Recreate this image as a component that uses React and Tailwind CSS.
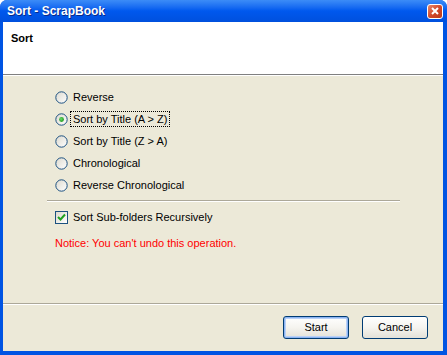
import { useState } from "react";

const options = [
  "Reverse",
  "Sort by Title (A > Z)",
  "Sort by Title (Z > A)",
  "Chronological",
  "Reverse Chronological",
];

const Radio = ({ checked }) => (
  <svg width="13" height="13" viewBox="0 0 13 13" className="shrink-0">
    <defs>
      <linearGradient id="rg" x1="0" y1="0" x2="1" y2="1">
        <stop offset="0" stopColor="#DCD9CE" />
        <stop offset="1" stopColor="#FFFFFF" />
      </linearGradient>
      <radialGradient id="dot" cx="0.4" cy="0.4" r="0.6">
        <stop offset="0" stopColor="#6BDC6B" />
        <stop offset="1" stopColor="#1E9A1E" />
      </radialGradient>
    </defs>
    <circle cx="6.5" cy="6.5" r="5.7" fill="url(#rg)" stroke="#1C5180" strokeWidth="1" />
    {checked && <circle cx="6.5" cy="6.5" r="2.4" fill="url(#dot)" />}
  </svg>
);

const Checkbox = () => (
  <div className="w-[13px] h-[13px] border border-[#1C5180] bg-gradient-to-br from-[#DCD9CE] to-white flex items-center justify-center shrink-0">
    <svg width="9" height="9" viewBox="0 0 9 9">
      <path d="M1 4 L3.5 6.5 L8 1.5" fill="none" stroke="#21A121" strokeWidth="2" />
    </svg>
  </div>
);

const Button = ({ children, active }) => (
  <button
    className={`w-[66px] h-[23px] rounded-[3px] border border-[#003C74] bg-gradient-to-b from-white via-[#F5F4EF] to-[#E3E1D8] text-[11px] text-black ${
      active ? "shadow-[inset_0_0_0_1px_#8CB4F2,inset_0_0_0_2px_#B9D1F6]" : ""
    }`}
  >
    {children}
  </button>
);

export default function App() {
  const [selected, setSelected] = useState(1);

  return (
    <div className="w-[447px] h-[355px] flex flex-col bg-[#0054E3] rounded-t-[7px] overflow-hidden font-['Liberation_Sans',Arial,sans-serif] text-[11px] text-black">
      {/* Title bar */}
      <div className="h-[22px] flex items-center justify-between pl-[7px] pr-[4px] bg-gradient-to-b from-[#3C8CF7] via-[#0058EE] to-[#0050DD]">
        <span className="text-white font-bold text-[12px] [text-shadow:1px_1px_#0A2A88]">
          Sort - ScrapBook
        </span>
        <div className="w-[16px] h-[15px] rounded-[3px] border border-white bg-gradient-to-br from-[#E8886A] via-[#D2482A] to-[#B83A1C] flex items-center justify-center">
          <svg width="8" height="8" viewBox="0 0 8 8">
            <path d="M1 1 L7 7 M7 1 L1 7" stroke="white" strokeWidth="2" />
          </svg>
        </div>
      </div>

      {/* Client area */}
      <div className="flex-1 ml-[3px] mr-[4px] mb-[4px] flex flex-col bg-[#ECE9D8]">
        {/* Header */}
        <div className="h-[52px] bg-white px-[8px] pt-[8px] font-bold text-[11px]">Sort</div>
        <div className="h-px bg-[#808080]" />
        <div className="h-px bg-white" />

        {/* Body */}
        <div className="flex-1 pt-[10px]">
          <div className="pl-[52px]">
            {options.map((label, i) => (
              <div
                key={label}
                className="h-[22px] flex items-center cursor-default"
                onClick={() => setSelected(i)}
              >
                <Radio checked={selected === i} />
                <span
                  className={`ml-[2px] px-[2px] leading-[14px] border border-dotted ${
                    selected === i ? "border-black" : "border-transparent"
                  }`}
                >
                  {label}
                </span>
              </div>
            ))}
          </div>

          <div className="ml-[44px] w-[353px] mt-[4px]">
            <div className="h-px bg-[#ACA899]" />
            <div className="h-px bg-white" />
          </div>

          <div className="pl-[52px] mt-[4px]">
            <div className="h-[22px] flex items-center">
              <Checkbox />
              <span className="ml-[5px]">Sort Sub-folders Recursively</span>
            </div>
            <div className="mt-[8px] text-[#FF0000] leading-[14px]">
              Notice: You can't undo this operation.
            </div>
          </div>
        </div>

        {/* Footer */}
        <div className="h-px bg-[#ACA899]" />
        <div className="h-px bg-white" />
        <div className="h-[46px] flex items-start justify-end gap-[13px] pt-[11px] pr-[15px]">
          <Button active>Start</Button>
          <Button>Cancel</Button>
        </div>
      </div>
    </div>
  );
}
